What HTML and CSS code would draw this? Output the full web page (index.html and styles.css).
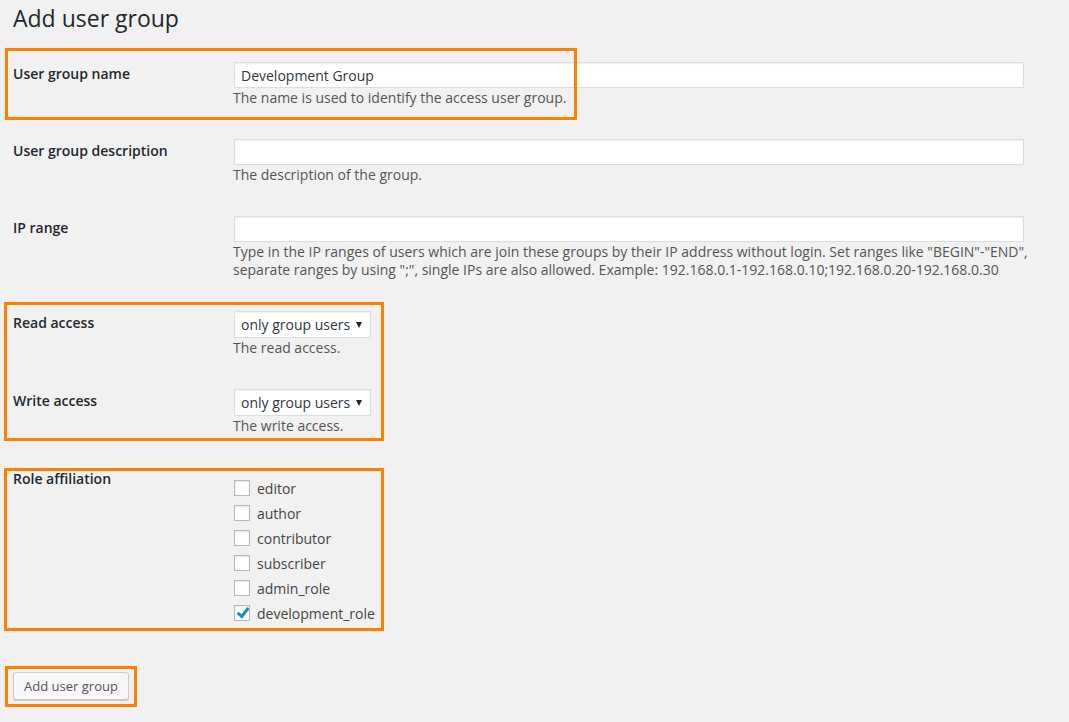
FILE: index.html
```html
<!DOCTYPE html>
<html lang="en">
<head>
<meta charset="utf-8">
<title>Add user group</title>
<link rel="stylesheet" href="styles.css">
</head>
<body>
<div class="wrap">
  <h1 class="page-title">Add user group</h1>
  <form class="group-form">
    <table class="form-table">
      <tbody>
        <tr>
          <th><label for="name">User group name</label></th>
          <td>
            <input id="name" class="text-input" type="text" value="Development Group">
            <p class="description">The name is used to identify the access user group.</p>
          </td>
        </tr>
        <tr>
          <th><label for="desc">User group description</label></th>
          <td>
            <input id="desc" class="text-input" type="text" value="">
            <p class="description">The description of the group.</p>
          </td>
        </tr>
        <tr>
          <th><label for="ip">IP range</label></th>
          <td>
            <input id="ip" class="text-input" type="text" value="">
            <p class="description">Type in the IP ranges of users which are join these groups by their IP address without login. Set ranges like "BEGIN"-"END",<br>separate ranges by using ";", single IPs are also allowed. Example: 192.168.0.1-192.168.0.10;192.168.0.20-192.168.0.30</p>
          </td>
        </tr>
        <tr>
          <th><label for="read">Read access</label></th>
          <td>
            <span class="select-wrap"><select id="read" class="select"><option>only group users</option></select></span>
            <p class="description">The read access.</p>
          </td>
        </tr>
        <tr>
          <th><label for="write">Write access</label></th>
          <td>
            <span class="select-wrap"><select id="write" class="select"><option>only group users</option></select></span>
            <p class="description">The write access.</p>
          </td>
        </tr>
        <tr>
          <th><label>Role affiliation</label></th>
          <td>
            <ul class="role-list">
              <li><label class="role"><input type="checkbox" class="check"><span>editor</span></label></li>
              <li><label class="role"><input type="checkbox" class="check"><span>author</span></label></li>
              <li><label class="role"><input type="checkbox" class="check"><span>contributor</span></label></li>
              <li><label class="role"><input type="checkbox" class="check"><span>subscriber</span></label></li>
              <li><label class="role"><input type="checkbox" class="check"><span>admin_role</span></label></li>
              <li><label class="role"><input type="checkbox" class="check" checked><span>development_role</span></label></li>
            </ul>
          </td>
        </tr>
      </tbody>
    </table>
    <p class="submit"><button type="button" class="button">Add user group</button></p>
  </form>
</div>
<div class="mark mark-name"></div>
<div class="mark mark-access"></div>
<div class="mark mark-roles"></div>
<div class="mark mark-submit"></div>
</body>
</html>
```
FILE: styles.css
```css
html, body {
  margin: 0;
  padding: 0;
}
body {
  background: #f1f1f1;
  font-family: "Open Sans", "Liberation Sans", sans-serif;
  color: #444;
  font-size: 13px;
  position: relative;
  min-height: 722px;
}
.wrap {
  padding: 4px 0 0 13px;
}
.page-title {
  margin: 0;
  font-size: 23px;
  font-weight: 400;
  line-height: 29px;
  color: #23282d;
}
.form-table {
  margin-top: 12px;
  border-collapse: collapse;
  width: 1028px;
}
.form-table th {
  width: 200px;
  padding: 20px 10px 20px 0;
  text-align: left;
  vertical-align: top;
  font-size: 14px;
  font-weight: 600;
  line-height: 18px;
  color: #23282d;
}
.form-table td {
  padding: 16px 10px 15px 10px;
  vertical-align: top;
  font-size: 14px;
  line-height: 18px;
}
.text-input {
  display: block;
  box-sizing: border-box;
  width: 790px;
  height: 26px;
  margin: 1px 0 1px 1px;
  padding: 2px 6px;
  border: 1px solid #ddd;
  background: #fff;
  box-shadow: inset 0 1px 2px rgba(0,0,0,.07);
  font-family: inherit;
  font-size: 14px;
  color: #32373c;
  outline: none;
}
.description {
  margin: 0;
  font-size: 14px;
  line-height: 18px;
  color: #555;
}
.select-wrap {
  position: relative;
  display: block;
  width: 137px;
  margin: 1px 0 1px 1px;
}
.select {
  display: block;
  box-sizing: border-box;
  width: 137px;
  height: 27px;
  padding: 0 20px 0 6px;
  border: 1px solid #ddd;
  border-radius: 0;
  background: #fff;
  box-shadow: inset 0 1px 2px rgba(0,0,0,.07);
  -webkit-appearance: none;
  appearance: none;
  font-family: inherit;
  font-size: 14px;
  line-height: 25px;
  color: #32373c;
  outline: none;
}
.select-wrap::after {
  content: "";
  position: absolute;
  right: 9px;
  top: 11px;
  border-left: 3.5px solid transparent;
  border-right: 3.5px solid transparent;
  border-top: 6px solid #222;
  pointer-events: none;
}
.role-list {
  list-style: none;
  margin: 10px 0 0 0;
  padding: 0;
}
.role {
  display: flex;
  align-items: center;
  height: 25px;
  font-size: 14px;
  color: #444;
}
.check {
  -webkit-appearance: none;
  appearance: none;
  position: relative;
  box-sizing: border-box;
  width: 16px;
  height: 16px;
  margin: -1px 7px 0 1px;
  border: 1px solid #b4b9be;
  background: #fff;
  box-shadow: inset 0 1px 2px rgba(0,0,0,.1);
}
.check:checked::before {
  content: "";
  position: absolute;
  left: 2px;
  top: 2px;
  width: 9px;
  height: 4px;
  border-left: 3px solid #1e8cbe;
  border-bottom: 3px solid #1e8cbe;
  transform: rotate(-52deg);
}
.submit {
  margin: 0;
  padding-top: 31px;
}
.button {
  box-sizing: border-box;
  height: 28px;
  width: 116px;
  padding: 0 10px 1px;
  border: 1px solid #ccc;
  border-radius: 3px;
  background: #f7f7f7;
  box-shadow: 0 1px 0 #ccc;
  font-family: inherit;
  font-size: 13px;
  line-height: 26px;
  color: #555;
}
.mark {
  position: absolute;
  box-sizing: border-box;
  border: 3.5px solid #ff8000;
  pointer-events: none;
}
.mark-name {
  left: 5px;
  top: 48px;
  width: 572px;
  height: 72px;
}
.mark-access {
  left: 4px;
  top: 302px;
  width: 380px;
  height: 139px;
}
.mark-roles {
  left: 4px;
  top: 468px;
  width: 380px;
  height: 163px;
}
.mark-submit {
  left: 5px;
  top: 666px;
  width: 132px;
  height: 41px;
}
```
